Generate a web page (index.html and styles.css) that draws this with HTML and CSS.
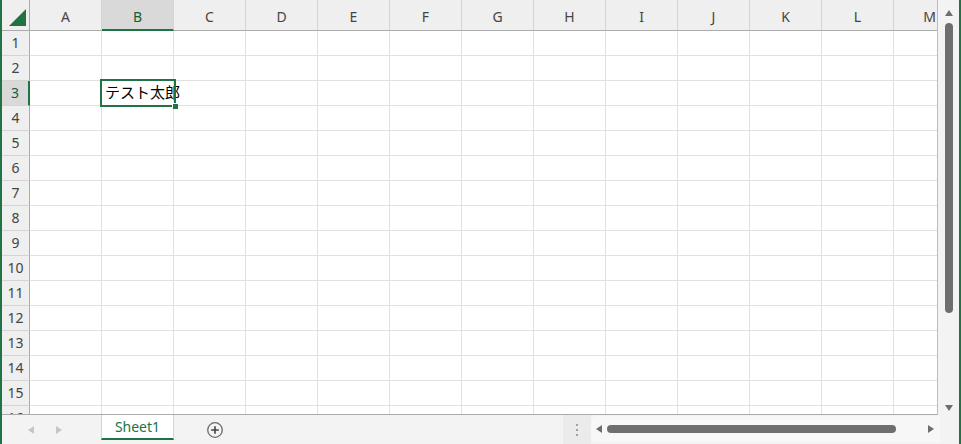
FILE: index.html
```html
<!DOCTYPE html>
<html>
<head>
	<title>Book1 - Excel</title>
	<link rel="stylesheet" href="styles.css">
</head>
<body>
	<div class="app">
		<div class="main">
			<div class="sheet">
				<div class="grid" id="grid">
					<div class="corner">
						<svg width="28" height="30" viewBox="0 0 28 30"><polygon points="24,9 24,26 7,26" fill="#217346"/></svg>
					</div>
					<div class="selection"><span class="handle"></span></div>
				</div>
			</div>
			<div class="vscroll">
				<span class="tri up"></span>
				<div class="vtrack"><div class="vthumb"></div></div>
				<span class="tri down"></span>
			</div>
		</div>
		<div class="bar">
			<div class="nav">
				<span class="tri left dim"></span>
				<span class="tri right dim"></span>
			</div>
			<div class="tab">Sheet1</div>
			<div class="add">
				<svg width="18" height="18" viewBox="0 0 18 18">
					<circle cx="9" cy="9" r="7.3" fill="none" stroke="#6a6a6a" stroke-width="1.3"/>
					<path d="M9 5.2v7.6M5.2 9h7.6" stroke="#444" stroke-width="1.6"/>
				</svg>
			</div>
			<div class="spacer"></div>
			<div class="split"><span></span><span></span><span></span></div>
			<div class="hscroll">
				<span class="tri left"></span>
				<div class="hthumb"></div>
				<span class="tri right"></span>
			</div>
		</div>
	</div>
<script>
	let cols = ["A","B","C","D","E","F","G","H","I","J","K","L","M"];
	let grid = document.getElementById("grid");
	let sel = grid.querySelector(".selection");
	let html = "";

	// column headers
	cols.forEach(function(c){
		html += `<div class="colhead${c === "B" ? " active" : ""}">${c}</div>`;
	});

	// rows
	for(let r = 1; r <= 16; r++){
		html += `<div class="rowhead${r === 3 ? " active" : ""}">${r}</div>`;
		cols.forEach(function(c){
			let text = (r === 3 && c === "B") ? "テスト太郎" : "";
			html += `<div class="cell">${text}</div>`;
		});
	}
	sel.insertAdjacentHTML("beforebegin", html);
</script>
</body>
</html>
```

FILE: styles.css
```css
body{
	margin: 0;
	background: #ffffff;
	font-family: "Noto Sans", "Noto Sans CJK JP", sans-serif;
}
.app{
	width: 961px;
	height: 444px;
	box-sizing: border-box;
	border-left: 2px solid #217346;
	border-right: 2px solid #217346;
	display: flex;
	flex-direction: column;
	overflow: hidden;
}
.main{
	display: flex;
	height: 415px;
}
.sheet{
	width: 936px;
	height: 415px;
	box-sizing: border-box;
	border-right: 1px solid #bdbdbd;
	border-bottom: 1px solid #ababab;
	overflow: hidden;
}
.grid{
	position: relative;
	display: grid;
	grid-template-columns: 28px repeat(13, 72px);
	grid-template-rows: 31px repeat(16, 25px);
}
.corner{
	background: #efefef;
	border-right: 1px solid #ababab;
	border-bottom: 1px solid #ababab;
	box-sizing: border-box;
}
.corner svg{
	display: block;
}
.colhead{
	background: #efefef;
	border-right: 1px solid #d4d4d4;
	border-bottom: 1px solid #ababab;
	box-sizing: border-box;
	display: flex;
	align-items: center;
	justify-content: center;
	padding-top: 3px;
	font-size: 14px;
	color: #444444;
}
.colhead.active{
	background: #d9d9d9;
	border-bottom: 2px solid #217346;
	color: #185c37;
}
.rowhead{
	background: #efefef;
	border-right: 1px solid #ababab;
	border-bottom: 1px solid #d4d4d4;
	box-sizing: border-box;
	display: flex;
	align-items: center;
	justify-content: center;
	padding-bottom: 2px;
	font-size: 14px;
	color: #444444;
}
.rowhead.active{
	background: #d9d9d9;
	border-right: 2px solid #217346;
	color: #185c37;
}
.cell{
	border-right: 1px solid #e1e1e1;
	border-bottom: 1px solid #e1e1e1;
	box-sizing: border-box;
	font-size: 15px;
	line-height: 23px;
	padding-left: 3px;
	white-space: nowrap;
	overflow: visible;
	color: #000000;
	position: relative;
	z-index: 1;
}
.selection{
	position: absolute;
	left: 98px;
	top: 79px;
	width: 76px;
	height: 28px;
	box-sizing: border-box;
	border: 2px solid #217346;
	z-index: 2;
}
.handle{
	position: absolute;
	right: -4px;
	bottom: -4px;
	width: 5px;
	height: 5px;
	background: #217346;
	border-left: 1px solid #ffffff;
	border-top: 1px solid #ffffff;
}

/* scrollbars */
.vscroll{
	width: 21px;
	background: #f3f3f3;
	display: flex;
	flex-direction: column;
	align-items: center;
	padding-top: 10px;
	box-sizing: border-box;
}
.vtrack{
	flex: 1;
	width: 100%;
	display: flex;
	justify-content: center;
	padding-top: 7px;
}
.vthumb{
	width: 8px;
	height: 290px;
	border-radius: 4px;
	background: #6e6e6e;
}
.tri{
	width: 0;
	height: 0;
	border-style: solid;
	border-color: transparent;
}
.tri.up{
	border-width: 0 4px 6px 4px;
	border-bottom-color: #6e6e6e;
}
.tri.down{
	border-width: 6px 4px 0 4px;
	border-top-color: #6e6e6e;
	margin-bottom: 4px;
}
.tri.left{
	border-width: 4px 6px 4px 0;
	border-right-color: #6e6e6e;
}
.tri.right{
	border-width: 4px 0 4px 6px;
	border-left-color: #6e6e6e;
}
.tri.left.dim{
	border-right-color: #c6c6c6;
}
.tri.right.dim{
	border-left-color: #c6c6c6;
}

/* bottom bar */
.bar{
	height: 29px;
	background: #f3f3f3;
	display: flex;
	align-items: stretch;
}
.nav{
	width: 99px;
	display: flex;
	align-items: center;
	gap: 22px;
	padding-left: 26px;
	box-sizing: border-box;
}
.tab{
	width: 73px;
	height: 25px;
	box-sizing: border-box;
	background: #ffffff;
	border-left: 1px solid #d4d4d4;
	border-right: 1px solid #d4d4d4;
	border-bottom: 2px solid #217346;
	color: #217346;
	font-size: 14px;
	text-align: center;
	line-height: 23px;
}
.add{
	margin-left: 32px;
	display: flex;
	align-items: center;
}
.add svg{
	display: block;
}
.spacer{
	flex: 1;
}
.split{
	width: 28px;
	background: #ebebeb;
	display: flex;
	flex-direction: column;
	align-items: center;
	justify-content: center;
	gap: 3px;
}
.split span{
	width: 2px;
	height: 2px;
	background: #a0a0a0;
}
.hscroll{
	width: 349px;
	margin-right: 19px;
	display: flex;
	align-items: center;
	padding-left: 5px;
	padding-right: 6px;
	box-sizing: border-box;
	background: #f7f7f7;
	border-radius: 6px 0 0 6px;
	margin-top: 1px;
	margin-bottom: 2px;
}
.hthumb{
	width: 289px;
	height: 8px;
	border-radius: 4px;
	background: #6e6e6e;
	margin-left: 5px;
	margin-right: auto;
}
```
